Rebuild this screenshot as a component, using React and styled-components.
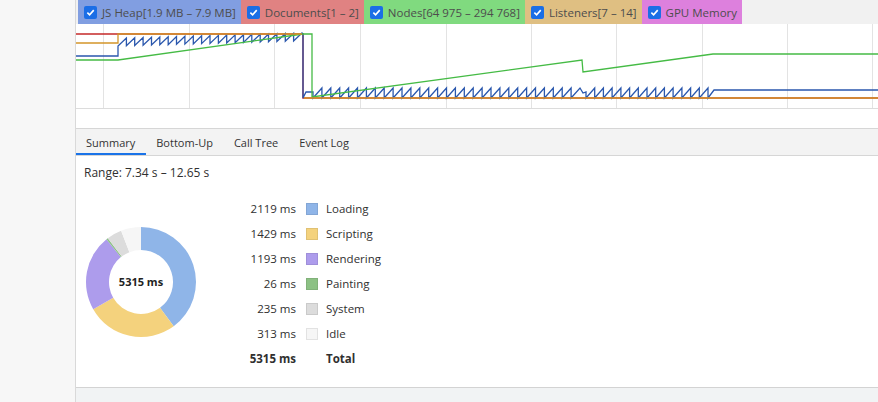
import * as React from "react";
import styled, { createGlobalStyle } from "styled-components";

const counters = [
  { label: "JS Heap[1.9 MB – 7.9 MB]", color: "#819ee1" },
  { label: "Documents[1 – 2]", color: "#e08282" },
  { label: "Nodes[64 975 – 294 768]", color: "#80da7f" },
  { label: "Listeners[7 – 14]", color: "#dfbf82" },
  { label: "GPU Memory", color: "#dd80dd" },
];

const tabs = ["Summary", "Bottom-Up", "Call Tree", "Event Log"];

const categories = [
  { label: "Loading", value: 2119, color: "#8fb5e8" },
  { label: "Scripting", value: 1429, color: "#f4d27d" },
  { label: "Rendering", value: 1193, color: "#ad9cec" },
  { label: "Painting", value: 26, color: "#8cc184" },
  { label: "System", value: 235, color: "#dcdcdc" },
  { label: "Idle", value: 313, color: "#f6f6f6" },
];

const total = categories.reduce((sum, c) => sum + c.value, 0);

const gridLines = [103, 189, 274, 360, 446, 531, 616, 702, 787, 872];

// sawtooth: slow rise, sharp drop (gc)
function sawtooth(x0, x1, count, bottomStart, bottomEnd, height) {
  const w = (x1 - x0) / count;
  let d = "";
  for (let i = 0; i < count; i++) {
    const yb = bottomStart + ((bottomEnd - bottomStart) * i) / (count - 1);
    const ybNext = bottomStart + ((bottomEnd - bottomStart) * (i + 1)) / (count - 1);
    const xs = x0 + i * w;
    d += `L${xs.toFixed(1)} ${yb.toFixed(1)} L${(xs + w).toFixed(1)} ${(yb - height).toFixed(1)} `;
    if (i < count - 1) d += `L${(xs + w).toFixed(1)} ${ybNext.toFixed(1)} `;
  }
  return d;
}

const heapPath =
  "M76 56 L118 56 L118 46 " +
  sawtooth(118, 302, 22, 46, 41, 8) +
  "L303 34 L303 98 L306 92 L313 92 " +
  sawtooth(313, 580, 30, 98, 98, 10) +
  "L583 93 L586 92 " +
  sawtooth(586, 708, 14, 98, 98, 10) +
  "L708 98 L714 90 L878 90";

function arcPath(cx, cy, rIn, rOut, a0, a1) {
  const p = (r, a) => [cx + r * Math.cos(a), cy + r * Math.sin(a)];
  const large = a1 - a0 > Math.PI ? 1 : 0;
  const [x0, y0] = p(rOut, a0);
  const [x1, y1] = p(rOut, a1);
  const [x2, y2] = p(rIn, a1);
  const [x3, y3] = p(rIn, a0);
  return `M${x0} ${y0} A${rOut} ${rOut} 0 ${large} 1 ${x1} ${y1} L${x2} ${y2} A${rIn} ${rIn} 0 ${large} 0 ${x3} ${y3} Z`;
}

function Donut() {
  let angle = -Math.PI / 2;
  return (
    <DonutBox>
      <svg width="114" height="114" viewBox="0 0 114 114">
        {categories.map((c) => {
          const a0 = angle;
          const a1 = angle + (c.value / total) * Math.PI * 2;
          angle = a1;
          return <path key={c.label} d={arcPath(57, 57, 32, 55, a0, a1)} fill={c.color} />;
        })}
      </svg>
      <DonutLabel>{total} ms</DonutLabel>
    </DonutBox>
  );
}

function CheckBox() {
  return (
    <Check>
      <svg width="9" height="9" viewBox="0 0 10 10">
        <path d="M1.5 5.2 L4 7.6 L8.6 2.4" fill="none" stroke="#fff" strokeWidth="1.8" />
      </svg>
    </Check>
  );
}

export default function App() {
  return (
    <>
      <GlobalStyle />
      <Page>
        <Sidebar />
        <Main>
          <CounterBar>
            {counters.map((c) => (
              <Counter key={c.label} $bg={c.color}>
                <CheckBox />
                {c.label}
              </Counter>
            ))}
          </CounterBar>

          <Chart>
            <svg width="802" height="84" viewBox="76 24 802 84">
              {gridLines.map((x) => (
                <line key={x} x1={x + 0.5} y1="24" x2={x + 0.5} y2="108" stroke="#e3e3e3" />
              ))}
              <path d="M76 34 L303 34 L303 98 L878 98" fill="none" stroke="#c52a2a" strokeWidth="1.5" />
              <path d={heapPath} fill="none" stroke="#2a57ad" strokeWidth="1.3" />
              <path
                d="M76 60 L118 60 L303 34 L312 34 L312 97 L582 60 L583 72 L713 54 L878 54"
                fill="none"
                stroke="#45bb45"
                strokeWidth="1.3"
              />
              <path d="M76 43 L118 43 L118 34 L302 34 M304 98 L878 98" fill="none" stroke="#d3952a" strokeWidth="1.3" />
            </svg>
          </Chart>
          <ChartGap />

          <TabBar>
            {tabs.map((t, i) => (
              <Tab key={t} $active={i === 0}>
                {t}
              </Tab>
            ))}
          </TabBar>

          <Content>
            <Range>Range: 7.34 s – 12.65 s</Range>
            <SummaryRow>
              <Donut />
              <Legend>
                {categories.map((c) => (
                  <React.Fragment key={c.label}>
                    <LegendValue>{c.value} ms</LegendValue>
                    <Swatch $color={c.color} />
                    <LegendLabel>{c.label}</LegendLabel>
                  </React.Fragment>
                ))}
                <LegendValue $bold>{total} ms</LegendValue>
                <span />
                <LegendLabel $bold>Total</LegendLabel>
              </Legend>
            </SummaryRow>
          </Content>
          <Footer />
        </Main>
      </Page>
    </>
  );
}

const GlobalStyle = createGlobalStyle`
  body {
    margin: 0;
    font-family: "Open Sans", "Noto Sans", sans-serif;
    font-size: 11px;
    color: #303030;
  }
`;

const Page = styled.div`
  display: flex;
  height: 402px;
  overflow: hidden;
`;

const Sidebar = styled.div`
  width: 75px;
  flex: 0 0 75px;
  background-color: #f7f7f7;
  border-right: 1px solid #d9d9d9;
`;

const Main = styled.div`
  flex: 1;
  display: flex;
  flex-direction: column;
  min-width: 0;
`;

const CounterBar = styled.div`
  display: flex;
  height: 24px;
  padding-left: 2px;
  background-color: #f1f1f1;
`;

const Counter = styled.div`
  display: flex;
  align-items: center;
  gap: 5px;
  padding: 0 5px 0 6px;
  background-color: ${(p) => p.$bg};
  color: #4d4d4d;
  font-size: 11.5px;
  white-space: nowrap;
`;

const Check = styled.span`
  display: flex;
  justify-content: center;
  align-items: center;
  width: 13px;
  height: 13px;
  border-radius: 2px;
  background-color: #1b6ee6;
`;

const Chart = styled.div`
  height: 84px;
  border-bottom: 1px solid #dcdcdc;
  background-color: #ffffff;

  svg {
    display: block;
  }
`;

const ChartGap = styled.div`
  height: 19px;
  border-bottom: 1px solid #d6d6d6;
  background-color: #ffffff;
`;

const TabBar = styled.div`
  display: flex;
  height: 26px;
  background-color: #f3f3f3;
  border-bottom: 1px solid #d6d6d6;
`;

const Tab = styled.div`
  display: flex;
  align-items: center;
  padding: 0 11px 0 10px;
  color: #333333;
  box-shadow: ${(p) => (p.$active ? "inset 0 -2px 0 #1a73e8" : "none")};
`;

const Content = styled.div`
  flex: 1;
  padding: 9px 8px;
  background-color: #ffffff;
`;

const Range = styled.div`
  font-size: 12px;
  line-height: 16px;
`;

const SummaryRow = styled.div`
  display: flex;
  align-items: center;
  margin-top: 15px;
  font-size: 11.5px;
`;

const DonutBox = styled.div`
  position: relative;
  width: 114px;
  height: 114px;
  margin-bottom: 4px;

  svg {
    display: block;
  }
`;

const DonutLabel = styled.div`
  position: absolute;
  inset: 0;
  display: flex;
  justify-content: center;
  align-items: center;
  font-size: 11px;
  font-weight: 700;
  color: #222222;
`;

const Legend = styled.div`
  display: grid;
  grid-template-columns: 60px 12px auto;
  grid-auto-rows: 25px;
  align-items: center;
  column-gap: 9px;
  margin-left: 38px;
`;

const LegendValue = styled.div`
  text-align: right;
  font-weight: ${(p) => (p.$bold ? 700 : 400)};
`;

const LegendLabel = styled.div`
  font-weight: ${(p) => (p.$bold ? 700 : 400)};
`;

const Swatch = styled.span`
  width: 12px;
  height: 12px;
  margin-left: 1px;
  box-sizing: border-box;
  background-color: ${(p) => p.$color};
  border: 1px solid rgba(0, 0, 0, 0.08);
`;

const Footer = styled.div`
  height: 14px;
  border-top: 1px solid #d3d3d3;
  background-color: #f1f3f4;
`;
